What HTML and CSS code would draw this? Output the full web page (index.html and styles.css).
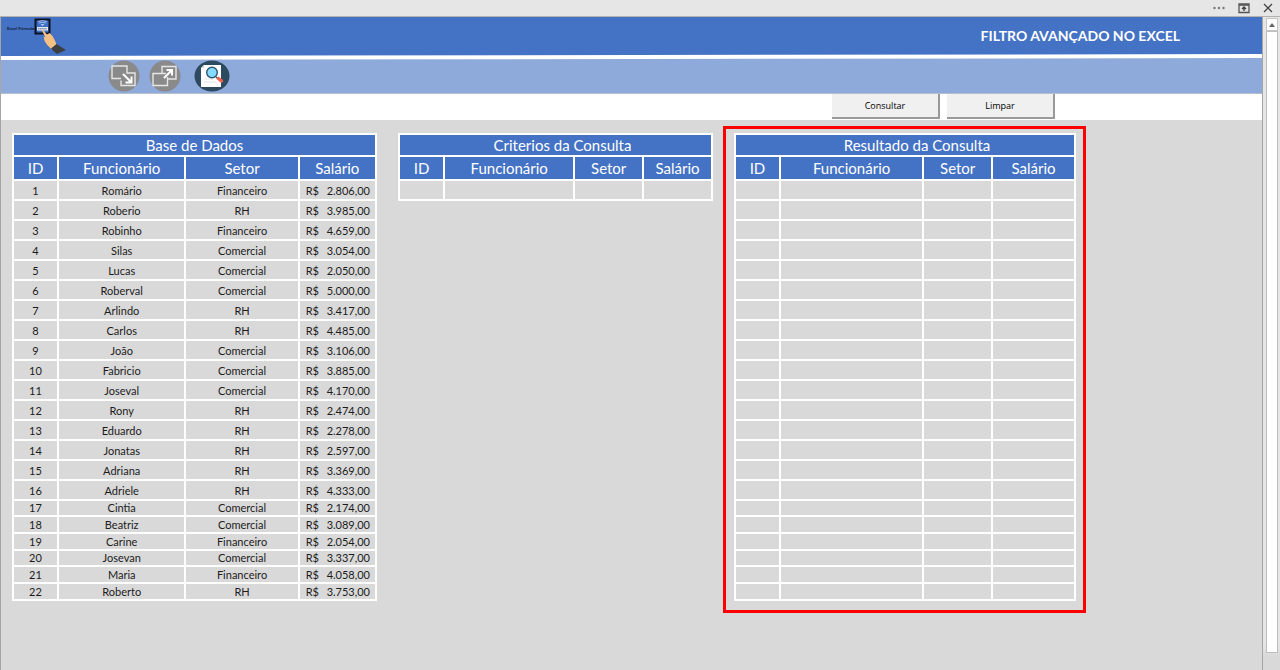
FILE: index.html
```html
<!DOCTYPE html>
<html lang="pt-BR">
<head>
<meta charset="utf-8">
<title>Filtro Avançado no Excel</title>
<link rel="stylesheet" href="styles.css">
</head>
<body>
<div class="window-bar">
  <button class="win-btn" type="button" aria-label="Mais opções"><svg width="14" height="12" viewBox="0 0 14 12"><g fill="#777"><circle cx="2.5" cy="6" r="1.2"/><circle cx="7" cy="6" r="1.2"/><circle cx="11.500" cy="6" r="1.2"/></g></svg></button>
  <button class="win-btn" type="button" aria-label="Opções da faixa"><svg width="12" height="12" viewBox="0 0 12 12"><path d="M1 2h10v8.500H1z" fill="none" stroke="#555" stroke-width="1.300"/><path d="M1 3h10" stroke="#555" stroke-width="1.600"/><path d="M6 9V5.500M4 7l2-2 2 2" fill="none" stroke="#444" stroke-width="1.400"/></svg></button>
  <button class="win-btn" type="button" aria-label="Fechar"><svg width="12" height="12" viewBox="0 0 12 12"><path d="M2 2l8 8M10 2l-8 8" stroke="#444" stroke-width="1.300"/></svg></button>
</div>
<div class="workspace">
  <main class="sheet">
    <header class="banner">
      <div class="brand">
        <span class="brand-name">Excel Fórmula</span>
        <svg class="brand-art" width="34" height="38" viewBox="0 0 34 38">
          <path d="M1.500 2.500h14v14h-14z" fill="#3f6fc4" stroke="#0b1020" stroke-width="2"/>
          <path d="M4 4.500q4.500-2 9 0M5 6q3.500-1.500 7 0" fill="none" stroke="#9db8e8" stroke-width="1"/>
          <path d="M6.500 7h4l-2 2z" fill="#b9ccf0"/>
          <path d="M3 10h11v3.500H3z" fill="#dfe8f8"/>
          <path d="M4 11.800h9" stroke="#51617f" stroke-width="1" stroke-dasharray="1.500 .6"/>
          <path d="M7.500 12.500q1.300-.6 2 .8l3.300 4.300 3-1.600 3 3.500q2.500 4 4 9l-5 4-5-5q-3-4-3.300-8l2 1.200z" fill="#f5c083"/>
          <path d="M22.500 27l9.500 6-9 4q-4-3-6-5.500z" fill="#3d4043"/>
        </svg>
      </div>
      <h1 class="title">FILTRO AVANÇADO NO EXCEL</h1>
    </header>
    <nav class="toolbar" aria-label="Ferramentas">
      <button class="tool" type="button" aria-label="Reduzir"><svg width="32" height="32" viewBox="0 0 32 32"><circle cx="16" cy="16" r="15.500" fill="#8a8a8a"/><path d="M19 11.500V6H4v12.500h9M21.500 13H27v12.500H13v-5M19 6v7h3" fill="none" stroke="#e6e6e6" stroke-width="1.400"/><path d="M15 14l7.500 7.500M23.500 16.500v6H17.500" fill="none" stroke="#fff" stroke-width="2"/></svg></button>
      <button class="tool" type="button" aria-label="Ampliar"><svg width="32" height="32" viewBox="0 0 32 32"><circle cx="16" cy="16" r="15.500" fill="#8a8a8a"/><path d="M13 13V6.500h14V19h-8M17 13.500H4V25.500h14.500V17" fill="none" stroke="#e6e6e6" stroke-width="1.400"/><path d="M15 18l8-8M17.500 10H23v5.500" fill="none" stroke="#fff" stroke-width="2"/></svg></button>
      <button class="tool tool-search" type="button" aria-label="Pesquisar"><svg width="36" height="32" viewBox="0 0 36 32"><ellipse cx="18" cy="16" rx="17.500" ry="15.500" fill="#2e4a60"/><path d="M10 5h17v22H7V8z" fill="#fff"/><path d="M7 8h3V5z" fill="#cfd6dc"/><path d="M10 19h9M10 22h12" stroke="#e4e4e4"/><path d="M22 17l3 2.500" stroke="#345" stroke-width="1.500"/><circle cx="18" cy="12.500" r="5.300" fill="#84dbff" stroke="#2e5570" stroke-width="1.400"/><path d="M24.500 18.500l3 2.500" stroke="#f0644b" stroke-width="3.500" stroke-linecap="round"/></svg></button>
    </nav>
    <div class="actions">
      <button class="action" type="button">Consultar</button>
      <button class="action" type="button">Limpar</button>
    </div>
    <div class="tables">
      <section class="panel">
        <table class="grid">
          <colgroup><col class="b-id"><col class="b-name"><col class="b-dept"><col class="b-pay"></colgroup>
          <thead>
            <tr class="caption"><th colspan="4">Base de Dados</th></tr>
            <tr class="heads"><th>ID</th><th>Funcionário</th><th>Setor</th><th>Salário</th></tr>
          </thead>
          <tbody id="base"></tbody>
        </table>
      </section>
      <section class="panel criteria">
        <table class="grid">
          <colgroup><col class="c-id"><col class="c-name"><col class="c-dept"><col class="c-pay"></colgroup>
          <thead>
            <tr class="caption"><th colspan="4">Criterios da Consulta</th></tr>
            <tr class="heads"><th>ID</th><th>Funcionário</th><th>Setor</th><th>Salário</th></tr>
          </thead>
          <tbody><tr><td></td><td></td><td></td><td></td></tr></tbody>
        </table>
      </section>
      <section class="result">
        <table class="grid">
          <colgroup><col class="r-id"><col class="r-name"><col class="r-dept"><col class="r-pay"></colgroup>
          <thead>
            <tr class="caption"><th colspan="4">Resultado da Consulta</th></tr>
            <tr class="heads"><th>ID</th><th>Funcionário</th><th>Setor</th><th>Salário</th></tr>
          </thead>
          <tbody id="result"></tbody>
        </table>
      </section>
    </div>
  </main>
  <div class="scroll">
    <button class="scroll-up" type="button" aria-label="Rolar para cima"><svg width="6" height="4" viewBox="0 0 6 4"><path d="M0 4l3-4 3 4z" fill="#666"/></svg></button>
    <div class="scroll-thumb"></div>
  </div>
</div>
<script src="script.js"></script>
</body>
</html>
```
FILE: styles.css
```css
* { box-sizing: border-box; }
body {
  margin: 0;
  min-height: 100vh;
  display: flex;
  flex-direction: column;
  background: #e6e6e6;
  font-family: Lato, "Open Sans", sans-serif;
  color: #1c1c1c;
}
button { font: inherit; padding: 0; border: 0; background: none; }
svg { display: block; }

.window-bar {
  height: 17px;
  display: flex;
  justify-content: flex-end;
  align-items: center;
  gap: 12px;
  padding-right: 6px;
  border-bottom: 1px solid #b5b2ae;
}
.workspace { flex: 1; display: flex; }
.sheet {
  flex: 1;
  display: flex;
  flex-direction: column;
  background: linear-gradient(#fff 0 60px, #d9d9d9 60px);
  border-left: 1px solid #a6a6a6;
  border-right: 1px solid #a6a6a6;
}

.banner, .toolbar, .actions { display: flex; }
.banner {
  height: 39px;
  justify-content: space-between;
  padding: 0 82px 0 6px;
  color: #fff;
  background: #4472c4;
  clip-path: polygon(0 0, 100% 0, 100% calc(100% - 2px), 0 100%);
}
.brand { display: flex; align-items: flex-start; }
.brand-name {
  padding-top: 9px;
  font: bold 4px/6px "Liberation Sans", sans-serif;
  color: #101c3a;
}
.title { margin: 0; padding-top: 9px; font-size: 14px; line-height: 20px; font-weight: 700; }
.toolbar {
  height: 36px;
  margin-top: 2px;
  padding: 2px 0 0 107px;
  gap: 9px;
  align-items: flex-start;
  background: #8eaadb;
  border-bottom: 1px solid #b8bfcc;
  clip-path: polygon(0 2px, 100% 0, 100% 100%, 0 100%);
}
.tool-search { margin-left: 4px; }
.actions {
  height: 26px;
  background: #fff;
  justify-content: flex-end;
  align-items: flex-start;
  gap: 7px;
  padding-right: 207px;
}
.action {
  width: 108px;
  height: 25px;
  background: #f0f0f0;
  border-right: 2px solid #999;
  border-bottom: 2px solid #999;
  font: 9px/14px "Open Sans", sans-serif;
  color: #000;
}

.tables {
  display: grid;
  grid-template-columns: 365fr 326fr 363fr 166fr;
  column-gap: 10px;
  padding: 6px 0 24px 11px;
  align-items: start;
}
.panel { padding-top: 7px; }
.criteria { padding-left: 11px; }
.result { border: 3px solid #f00; padding: 4px 7px 9px 8px; }

.grid { width: 100%; table-layout: fixed; border-collapse: collapse; }
.grid th, .grid td { border: 2px solid #fff; padding: 0; text-align: center; }
.grid th {
  background: #4472c4;
  color: #fff;
  font-size: 15px;
  line-height: 18px;
  font-weight: 400;
}
.grid td { padding-top: 2px; font-size: 11px; line-height: 14px; }
.grid .short td { padding-top: 0; }
.grid .caption th { line-height: 20px; }
.criteria .caption th { padding-left: 14px; }
.result .caption th { padding-left: 24px; }
.caption { height: 22px; }
.heads { height: 24px; }
.grid tbody tr { height: 20px; }
.grid tbody tr.short { height: 17px; }
.grid tbody tr.short:nth-child(3n+2) { height: 16px; }
.money { display: flex; justify-content: space-between; padding: 0 5px 0 6px; }

.b-id { width: 12.4%; } .b-name { width: 35.1%; } .b-dept { width: 31.2%; } .b-pay { width: 21.3%; }
.c-id { width: 14.4%; } .c-name { width: 41.6%; } .c-dept { width: 22%; } .c-pay { width: 22%; }
.r-id { width: 13.2%; } .r-name { width: 42.2%; } .r-dept { width: 20.2%; } .r-pay { width: 24.4%; }

.scroll {
  width: 17px;
  display: flex;
  flex-direction: column;
  padding: 1px 2px 0 3px;
  background: linear-gradient(#e6e6e6 0 96%, #d9d9d9 98%);
}
.scroll-up {
  height: 13px;
  display: flex;
  align-items: center;
  justify-content: center;
  background: #fff;
  border: 1px solid #c6c6c6;
}
.scroll-thumb { flex: 1; margin-bottom: 17px; background: #fff; border: 1px solid #bdbdbd; }
```
FILE: script.js
```javascript
const people = [
  ["Romário", "Financeiro", "2.806,00"], ["Roberio", "RH", "3.985,00"],
  ["Robinho", "Financeiro", "4.659,00"], ["Silas", "Comercial", "3.054,00"],
  ["Lucas", "Comercial", "2.050,00"], ["Roberval", "Comercial", "5.000,00"],
  ["Arlindo", "RH", "3.417,00"], ["Carlos", "RH", "4.485,00"],
  ["João", "Comercial", "3.106,00"], ["Fabricio", "Comercial", "3.885,00"],
  ["Joseval", "Comercial", "4.170,00"], ["Rony", "RH", "2.474,00"],
  ["Eduardo", "RH", "2.278,00"], ["Jonatas", "RH", "2.597,00"],
  ["Adriana", "RH", "3.369,00"], ["Adriele", "RH", "4.333,00"],
  ["Cintia", "Comercial", "2.174,00"], ["Beatriz", "Comercial", "3.089,00"],
  ["Carine", "Financeiro", "2.054,00"], ["Josevan", "Comercial", "3.337,00"],
  ["Maria", "Financeiro", "4.058,00"], ["Roberto", "RH", "3.753,00"]
];
const rowTag = i => (i > 15 ? '<tr class="short">' : "<tr>");
document.getElementById("base").innerHTML = people.map(([name, dept, pay], i) =>
  `${rowTag(i)}<td>${i + 1}</td><td>${name}</td><td>${dept}</td><td><div class="money"><span>R$</span><span>${pay}</span></div></td></tr>`
).join("");
document.getElementById("result").innerHTML = people.map((_, i) =>
  `${rowTag(i)}<td></td><td></td><td></td><td></td></tr>`
).join("");
```
